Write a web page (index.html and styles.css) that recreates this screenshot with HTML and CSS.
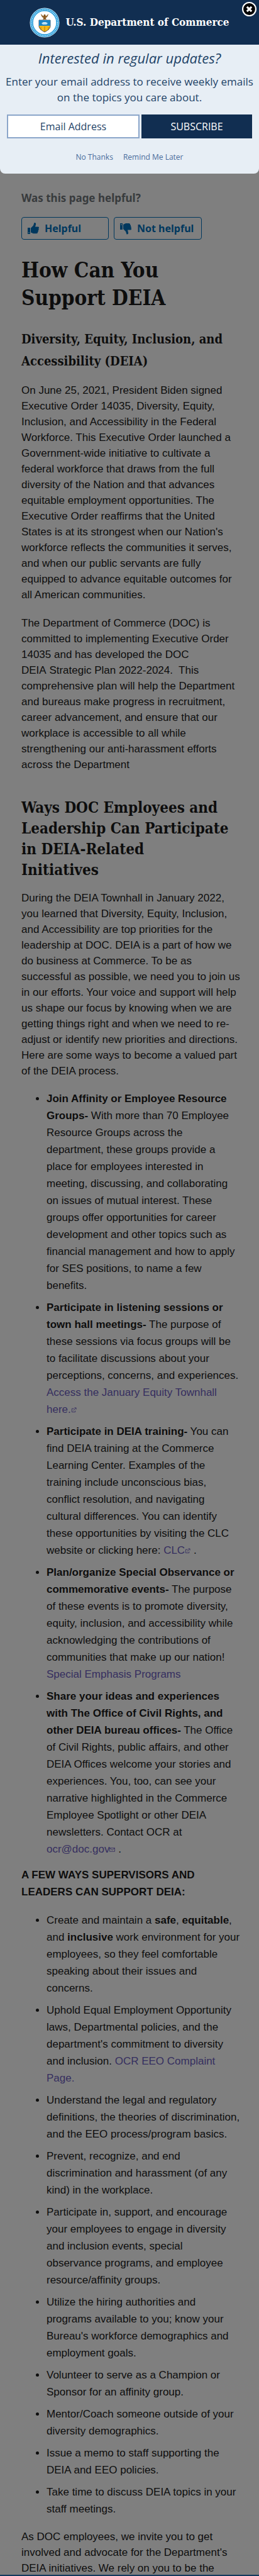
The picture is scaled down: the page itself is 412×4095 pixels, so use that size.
FILE: index.html
```html
<!DOCTYPE html>
<html lang="en">
<head>
<meta charset="utf-8">
<meta name="viewport" content="width=device-width, initial-scale=1">
<title>How Can You Support DEIA</title>
<link rel="stylesheet" href="styles.css">
</head>
<body>
<main class="page">
  <section class="feedback" aria-labelledby="feedback-title">
    <p class="feedback-title" id="feedback-title">Was this page helpful?</p>
    <div class="feedback-buttons">
      <button class="vote" type="button">
        <svg class="vote-icon" viewBox="0 0 20 20" aria-hidden="true"><path d="M1 9h4v10H1zM6 9.500 10 5.500 11.500 1c2-.5 3.300 1.200 2.300 3.700L13 7.500h4.500c1.800 0 2 2.200.7 3 .9 1 .6 2.300-.5 2.800.6 1 .2 2.200-.8 2.600.3 1.300-.5 2.300-2 2.300H10L6 16.500z" fill="#0071bc"/><path d="M2.300 16.200h1.400v1.400H2.300z" fill="#fff"/></svg>
        <span>Helpful</span>
      </button>
      <button class="vote" type="button">
        <svg class="vote-icon" viewBox="0 0 20 20" aria-hidden="true"><path d="M1 2h4v10H1zM6 4 10 2h5c1.500 0 2.300 1 2 2.200 1 .4 1.400 1.600.8 2.600 1.100.5 1.400 1.800.5 2.800 1.300.8 1.100 3-.7 3H13l.8 3.200c1 2.400-.3 4-2.300 3.700L10 15l-4-4z" fill="#0071bc"/><path d="M2.300 3.500h1.400v1.400H2.300z" fill="#fff"/></svg>
        <span>Not helpful</span>
      </button>
    </div>
  </section>

  <article>
    <h1>How Can You Support DEIA</h1>
    <h3>Diversity, Equity, Inclusion, and Accessibility (DEIA)</h3>
    <p>On June 25, 2021, President Biden signed Executive Order 14035, Diversity, Equity, Inclusion, and Accessibility in the Federal Workforce. This Executive Order launched a Government-wide initiative to cultivate a federal workforce that draws from the full diversity of the Nation and that advances equitable employment opportunities. The Executive Order reaffirms that the United States is at its strongest when our Nation's workforce reflects the communities it serves, and when our public servants are fully equipped to advance equitable outcomes for all American communities.</p>
    <p>The Department of Commerce (DOC) is committed to implementing Executive Order 14035 and has developed the DOC DEIA&nbsp;Strategic Plan 2022-2024.&nbsp; This comprehensive plan will help the Department and bureaus make progress in recruitment, career advancement, and ensure that our workplace is accessible to all while strengthening our anti-harassment efforts across the Department</p>

    <h2>Ways DOC Employees and Leadership Can Participate in DEIA-Related<br>Initiatives</h2>
    <p>During the DEIA Townhall in January 2022, you learned that Diversity, Equity, Inclusion, and Accessibility are top priorities for the leadership at DOC. DEIA is a part of how we do business at Commerce. To be as successful as possible, we need you to join us in our efforts. Your voice and support will help us shape our focus by knowing when we are getting things right and when we need to re-<wbr>adjust or identify new priorities and directions. Here are some ways to become a valued part of the DEIA process.</p>

    <ul>
      <li><strong>Join Affinity or Employee Resource Groups-</strong> With more than 70 Employee Resource Groups across the department, these groups provide a place for employees interested in meeting, discussing, and collaborating on issues of mutual interest. These groups offer opportunities for career development and other topics such as financial management and how to apply for SES positions, to name a few benefits.</li>
      <li><strong>Participate in listening sessions or town hall meetings-</strong> The purpose of these sessions via focus groups will be to facilitate discussions about your perceptions, concerns, and experiences. <a href="#townhall">Access the January Equity Townhall <span class="keep">here.<svg class="ext" viewBox="0 0 10 10" aria-hidden="true"><path d="M5 2.500H1.500v6h6V6M4 6l4.500-4.500M6 1h3v3" /></svg></span></a></li>
      <li><strong>Participate in DEIA training-</strong> You can find DEIA training at the Commerce Learning Center. Examples of the training include unconscious bias, conflict resolution, and navigating cultural differences. You can identify these opportunities by visiting the CLC website or clicking here: <a href="#clc" class="keep">CLC<svg class="ext" viewBox="0 0 10 10" aria-hidden="true"><path d="M5 2.500H1.500v6h6V6M4 6l4.500-4.500M6 1h3v3" /></svg></a> .</li>
      <li><strong>Plan/organize Special Observance or commemorative events-</strong> The purpose of these events is to promote diversity, equity, inclusion, and accessibility while acknowledging the contributions of communities that make up our nation! <a href="#programs">Special Emphasis Programs</a></li>
      <li><strong>Share your ideas and experiences with The Office of Civil Rights, and other DEIA bureau offices-</strong> The Office of Civil Rights, public affairs, and other DEIA Offices welcome your stories and experiences. You, too, can see your narrative highlighted in the Commerce Employee Spotlight or other DEIA newsletters. Contact OCR at <a href="mailto:ocr@doc.gov" class="keep">ocr@doc.gov<svg class="ext" viewBox="0 0 10 10" aria-hidden="true"><path d="M.5 2h9v6h-9zM.5 2 5 5.500 9.500 2" /></svg></a> .</li>
    </ul>

    <p class="lead-in"><strong>A FEW WAYS SUPERVISORS AND LEADERS CAN SUPPORT DEIA:</strong></p>
    <ul>
      <li>Create and maintain a <strong>safe</strong>, <strong>equitable</strong>, and <strong>inclusive</strong> work environment for your employees, so they feel comfortable speaking about their issues and concerns.</li>
      <li>Uphold Equal Employment Opportunity laws, Departmental policies, and the department's commitment to diversity and inclusion. <a href="#eeo">OCR EEO Complaint Page.</a></li>
      <li>Understand the legal and regulatory definitions, the theories of discrimination, and the EEO process/program basics.</li>
      <li>Prevent, recognize, and end discrimination and harassment (of any kind) in the workplace.</li>
      <li>Participate in, support, and encourage your employees to engage in diversity and inclusion events, special observance programs, and employee resource/affinity groups.</li>
      <li>Utilize the hiring authorities and programs available to you; know your Bureau's workforce demographics and employment goals.</li>
      <li>Volunteer to serve as a Champion or Sponsor for an affinity group.</li>
      <li>Mentor/Coach someone outside of your diversity demographics.</li>
      <li>Issue a memo to staff supporting the DEIA and EEO policies.</li>
      <li>Take time to discuss DEIA topics in your staff meetings.</li>
    </ul>
    <p class="closing">As DOC employees, we invite you to get involved and advocate for the Department's DEIA initiatives. We rely on you to be the</p>
  </article>
</main>

<div class="overlay">
  <div class="modal" role="dialog" aria-labelledby="modal-title">
    <header class="modal-head">
      <svg class="seal" viewBox="0 0 48 48" aria-hidden="true">
        <circle cx="24" cy="24" r="23.500" fill="#e9f7fd"/>
        <circle cx="24" cy="24" r="20.500" fill="none" stroke="#31a1dc" stroke-width="4.500"/>
        <circle cx="24" cy="24" r="20.500" fill="none" stroke="#bfe6f8" stroke-width="1.500" stroke-dasharray="1.500 1.200"/>
        <circle cx="24" cy="24" r="18" fill="#fff"/>
        <path d="M15 20h18v9c0 5-4 7-9 10-5-3-9-5-9-10z" fill="#f7b818" stroke="#2c3440" stroke-width=".8"/>
        <path d="M15 20h18v9H15z" fill="#1b84c4"/>
        <path d="M19 25l3-2h4l3 2-2 2h-6z" fill="#bfe1f2"/>
        <path d="M24 30v8M18 31v5M30 31v5" stroke="#a06c12" stroke-width=".8"/>
        <path d="M18 10c1 5 3 6 4.500 6.500L21 19h6l-1.500-2.500C27 16 29 15 30 10l-4 4-1-3h-2l-1 3z" fill="#8b5a20"/>
      </svg>
      <span class="brand">U.S. Department of Commerce</span>
      <button class="close" type="button" aria-label="Close">
        <svg viewBox="0 0 22 22" aria-hidden="true"><circle cx="11" cy="11" r="10" fill="#000" stroke="#fff" stroke-width="2"/><path d="M7.500 7.500l7 7M14.500 7.500l-7 7" stroke="#fff" stroke-width="3"/></svg>
      </button>
    </header>
    <form class="modal-body">
      <p class="modal-title" id="modal-title">Interested in regular updates?</p>
      <p class="modal-text"><label for="email">Enter your email address to receive weekly emails on the topics you care about.</label></p>
      <div class="signup">
        <input class="email" id="email" type="email" placeholder="Email Address">
        <button class="subscribe" type="submit">SUBSCRIBE</button>
      </div>
      <div class="later">
        <a href="#no">No Thanks</a>
        <a href="#later">Remind Me Later</a>
      </div>
    </form>
  </div>
</div>
</body>
</html>
```
FILE: styles.css
```css
* { box-sizing: border-box; }
html { height: 100%; }
body {
  margin: 0;
  position: relative;
  height: 100%;
  overflow: hidden;
  background: #fff;
  color: #1b1b1b;
  font: 17px/25px "Liberation Sans", Arial, sans-serif;
}
.page { padding: 301px 29px 0 34px; }

.feedback-title {
  margin: 0;
  font: 700 17px/28px "Noto Sans", sans-serif;
  color: #71767a;
}
.feedback-buttons {
  display: grid;
  grid-template-columns: 139px 140px;
  gap: 8px;
  margin-top: 16px;
}
.vote {
  display: flex;
  align-items: center;
  gap: 8px;
  height: 36px;
  padding: 0 8px;
  border: 1px solid #0071bc;
  border-radius: 4px;
  background: transparent;
  color: #0071bc;
  font: 700 16px/20px "Noto Sans", sans-serif;
  white-space: nowrap;
}
.vote-icon { width: 20px; height: 20px; flex: none; }

h1, h2, h3, .brand {
  font-family: "DejaVu Serif Condensed", "DejaVu Serif", serif;
  font-weight: 700;
}
h1, h2, h3 { color: #1b1b1b; }
h1 { margin: 27px 0 0; font-size: 33px; line-height: 44px; }
h3 { margin: 26px 0 0; font-size: 20px; line-height: 35px; }
h2 { margin: 39px 0 0; font-size: 24px; line-height: 33px; }
p { margin: 16px 0 0; }
p + p { margin-top: 20px; }

ul { margin: 18px 0 0; padding: 0 0 0 40px; }
li { line-height: 27px; margin-bottom: 8px; }
.lead-in { margin-top: 14px; line-height: 27px; }
.closing { margin-top: 18px; }
a { color: #6d5ec0; text-decoration: none; }
.keep { white-space: nowrap; }
.ext { width: 9px; height: 9px; fill: none; stroke: currentColor; }

.overlay {
  position: absolute;
  inset: 0;
  border-bottom: 2px solid #12395c;
  background: rgba(0, 0, 0, 0.5);
}
.modal {
  overflow: hidden;
  border-radius: 0 0 8px 8px;
  background: #e7eef5;
  font-family: "Open Sans", sans-serif;
  color: #1f4468;
}
.modal-head {
  position: relative;
  display: flex;
  align-items: center;
  justify-content: center;
  gap: 9px;
  height: 71px;
  background: #112e51;
}
.seal { width: 48px; height: 48px; }
.brand { color: #fff; font-size: 17px; }
.close {
  position: absolute;
  top: 3px;
  right: 4px;
  width: 23px;
  height: 23px;
  padding: 0;
  border: 0;
  background: none;
}
.close svg { display: block; }
.modal-body { padding: 6px 4px 14px; text-align: center; }
.modal-title { margin: 0; font-size: 22px; font-style: italic; line-height: 30px; }
.modal-text { margin: 10px 0 0; font-size: 17px; line-height: 25px; }
.signup {
  display: grid;
  grid-template-columns: 211px 1fr;
  gap: 3px;
  margin: 15px 7px 0;
}
.email, .subscribe {
  height: 38px;
  border-radius: 0;
  font: 16px/24px "Open Sans", sans-serif;
  text-align: center;
}
.email { width: 100%; border: 2px solid #8ba6ca; background: #fff; color: #1f4468; }
.email::placeholder { color: #1f4468; opacity: 1; }
.subscribe { border: 0; background: #112e51; color: #fff; }
.later {
  display: flex;
  justify-content: center;
  gap: 16px;
  margin-top: 18px;
  font-size: 12px;
  line-height: 24px;
}
.later a { color: #4a6d9c; }
```
